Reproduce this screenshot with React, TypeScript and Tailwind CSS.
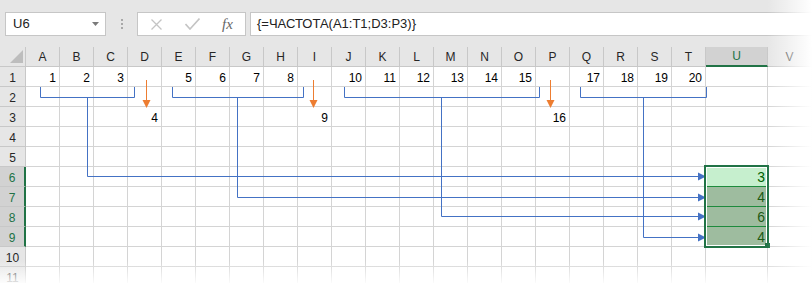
import React from "react";

const COLS = "ABCDEFGHIJKLMNOPQRSTUV".split("");
const ROWS = Array.from({ length: 11 }, (_, i) => i + 1);
const GAPS = ["D", "I", "P"];
const RESULT: Record<number, number> = { 6: 3, 7: 4, 8: 6, 9: 4 };
const SEL_ROWS = [6, 7, 8, 9];

function cellValue(col: string, row: number) {
  const idx = COLS.indexOf(col);
  if (row === 1 && idx < 20 && !GAPS.includes(col)) return idx + 1;
  if (row === 3 && GAPS.includes(col)) return idx + 1;
  if (col === "U" && RESULT[row] !== undefined) return RESULT[row];
  return null;
}

const FormulaBar = () => (
  <div className="h-[47px] bg-[#e6e6e6] flex items-start pt-[12px]">
    <div className="ml-[5px] w-[101px] h-[24px] bg-white border border-[#c6c6c6] flex items-center justify-between pl-[7px] pr-[6px]">
      <span className="text-[13px] text-[#222]">U6</span>
      <svg width="7" height="4" viewBox="0 0 7 4">
        <path d="M0 0h7L3.5 4z" fill="#7a7a7a" />
      </svg>
    </div>
    <div className="w-[31px] h-[24px] flex flex-col items-center justify-center gap-[2px]">
      <div className="w-[2px] h-[2px] bg-[#a8a8a8]" />
      <div className="w-[2px] h-[2px] bg-[#a8a8a8]" />
      <div className="w-[2px] h-[2px] bg-[#a8a8a8]" />
    </div>
    <div className="w-[109px] h-[24px] bg-white border border-[#c6c6c6] flex items-center pl-[13px]">
      <svg width="11" height="11" viewBox="0 0 11 11">
        <path d="M0.5 0.5L10.5 10.5M10.5 0.5L0.5 10.5" stroke="#c4c4c4" strokeWidth="1.3" />
      </svg>
      <svg className="ml-[23px]" width="15" height="12" viewBox="0 0 15 12">
        <path d="M0.5 6L5 11L14.5 0.5" stroke="#c4c4c4" strokeWidth="1.6" fill="none" />
      </svg>
      <span className="ml-[22px] text-[15px] italic text-[#666] leading-none" style={{ fontFamily: '"Liberation Serif", serif' }}>
        fx
      </span>
    </div>
    <div className="ml-[4px] flex-1 h-[24px] bg-white border border-r-0 border-[#c6c6c6] flex items-center pl-[6px] text-[13px] text-[#222]">
      {"{=ЧАСТОТА(A1:T1;D3:P3)}"}
    </div>
  </div>
);

const Sheet = () => (
  <div className="grid grid-cols-[26px_repeat(20,34px)_62px_1fr]">
    <div className="h-[20px] bg-[#e6e6e6] border-r border-b border-[#c8c8c8] relative">
      <svg className="absolute left-0 top-0" width="25" height="19" viewBox="0 0 25 19">
        <path d="M23 3V16H10z" fill="#bdbdbd" />
      </svg>
    </div>
    {COLS.map((c) =>
      c === "U" ? (
        <div key={c} className="h-[20px] flex items-center justify-center bg-[#d2d2d2] border-r border-[#c8c8c8] border-b-2 border-b-[#217346] text-[12px] text-[#217346]">
          {c}
        </div>
      ) : (
        <div key={c} className="h-[20px] flex items-center justify-center bg-[#e6e6e6] border-r border-b border-[#c8c8c8] text-[12px] text-[#262626]">
          {c}
        </div>
      )
    )}
    {ROWS.map((r) => (
      <React.Fragment key={r}>
        {SEL_ROWS.includes(r) ? (
          <div className="h-[20px] flex items-center justify-center pt-[2px] bg-[#d2d2d2] border-b border-[#c8c8c8] border-r-2 border-r-[#217346] text-[12px] text-[#217346]">
            {r}
          </div>
        ) : (
          <div className="h-[20px] flex items-center justify-center pt-[2px] bg-[#e6e6e6] border-r border-b border-[#c8c8c8] text-[12px] text-[#262626]">
            {r}
          </div>
        )}
        {COLS.map((c) => {
          const v = cellValue(c, r);
          if (c === "U" && r === 6)
            return (
              <div key={c} className="h-[20px] flex items-center justify-end pr-[3px] pt-[1px] bg-[#c6efce] border-b border-[#1e8b3d] text-[14px] text-[#006100]">
                {v}
              </div>
            );
          if (c === "U" && (r === 7 || r === 8))
            return (
              <div key={c} className="h-[20px] flex items-center justify-end pr-[3px] pt-[1px] bg-[#9ebc9f] border-b border-[#1e8b3d] text-[14px] text-[#1f5a14]">
                {v}
              </div>
            );
          if (c === "U" && r === 9)
            return (
              <div key={c} className="h-[20px] flex items-center justify-end pr-[3px] pt-[1px] bg-[#9ebc9f] border-b border-[#d4d4d4] text-[14px] text-[#1f5a14]">
                {v}
              </div>
            );
          return (
            <div key={c} className="h-[20px] flex items-center justify-end pr-[3px] pt-[2px] border-r border-b border-[#d4d4d4] text-[12px] text-black">
              {v}
            </div>
          );
        })}
      </React.Fragment>
    ))}
  </div>
);

const BLUE = "#4472c4";
const ORANGE = "#ed7d31";

const Arrows = () => {
  const groups = [
    { x1: 40.5, x2: 134.5, down: 87.5, y: 176.5 },
    { x1: 172.5, x2: 303.5, down: 237.5, y: 197.5 },
    { x1: 344.5, x2: 539.5, down: 441.5, y: 216.5 },
    { x1: 580.5, x2: 706.5, down: 643.5, y: 237.5 },
  ];
  const oranges = [146.5, 313.5, 550.5];
  return (
    <svg className="absolute left-0 top-0 pointer-events-none" width="812" height="283" viewBox="0 0 812 283">
      {groups.map((g, i) => (
        <g key={i} fill="none" stroke={BLUE} strokeWidth="1">
          <path d={`M${g.x1} 87V97.5H${g.x2}V87`} />
          <path d={`M${g.down} 97.5V${g.y}H699`} />
          <path d={`M698 ${g.y - 4}L706 ${g.y}L698 ${g.y + 4}z`} fill={BLUE} stroke="none" />
        </g>
      ))}
      {oranges.map((x) => (
        <g key={x}>
          <path d={`M${x} 80V101`} stroke={ORANGE} strokeWidth="1" />
          <path d={`M${x - 4} 100H${x + 4}L${x} 108z`} fill={ORANGE} />
        </g>
      ))}
    </svg>
  );
};

export default function App() {
  return (
    <div className="relative w-[812px] h-[283px] overflow-hidden bg-white" style={{ fontFamily: '"Liberation Sans", Arial, sans-serif' }}>
      <FormulaBar />
      <Sheet />
      <Arrows />
      <div className="absolute left-[704px] top-[165px] w-[65px] h-[83px] border-2 border-[#217346] shadow-[inset_0_0_0_1px_#fff] pointer-events-none" />
      <div className="absolute left-[765px] top-[243px] w-[5px] h-[5px] bg-[#217346] pointer-events-none" />
      <div className="absolute right-0 top-0 w-[45px] h-[283px] bg-gradient-to-r from-transparent to-white pointer-events-none" />
      <div className="absolute left-0 bottom-0 w-[812px] h-[22px] bg-gradient-to-b from-transparent to-white/90 pointer-events-none" />
    </div>
  );
}
